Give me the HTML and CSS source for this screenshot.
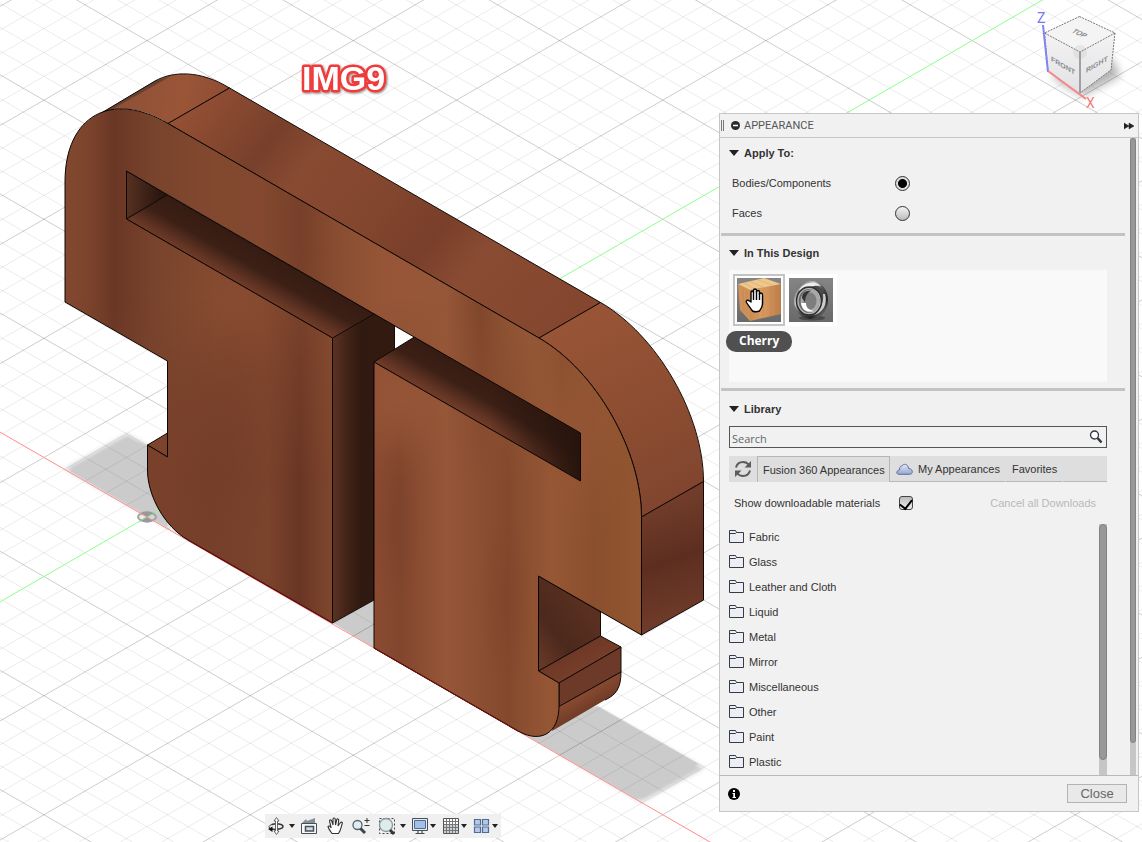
FILE: index.html
```html
<!DOCTYPE html>
<html lang="en">
<head>
<meta charset="utf-8">
<title>Appearance</title>
<link rel="stylesheet" href="styles.css">
</head>
<body>
<main class="workspace">
  <svg class="scene" aria-label="Model view">
    <defs>
      <linearGradient id="front" gradientUnits="userSpaceOnUse" x1="65" y1="0" x2="642" y2="0">
        <stop offset="0" stop-color="#83482f"/><stop offset=".04" stop-color="#7c442d"/><stop offset=".085" stop-color="#6a3725"/><stop offset=".15" stop-color="#78432c"/>
        <stop offset=".26" stop-color="#82492f"/><stop offset=".34" stop-color="#83482f"/><stop offset=".41" stop-color="#77402a"/><stop offset=".47" stop-color="#884d31"/>
        <stop offset=".55" stop-color="#965537"/><stop offset=".66" stop-color="#965738"/><stop offset=".72" stop-color="#80472c"/><stop offset=".77" stop-color="#915534"/>
        <stop offset=".81" stop-color="#965937"/><stop offset=".86" stop-color="#8c5030"/><stop offset=".93" stop-color="#9a5b37"/><stop offset="1" stop-color="#935632"/>
      </linearGradient>
      <linearGradient id="lower" gradientUnits="userSpaceOnUse" x1="147" y1="0" x2="333" y2="0">
        <stop offset="0" stop-color="#7a412c"/><stop offset=".35" stop-color="#753f2a"/><stop offset=".65" stop-color="#7a432c"/><stop offset=".82" stop-color="#693624"/><stop offset="1" stop-color="#80472e"/>
      </linearGradient>
      <linearGradient id="right" gradientUnits="userSpaceOnUse" x1="374" y1="0" x2="642" y2="0">
        <stop offset="0" stop-color="#8b4b31"/><stop offset=".1" stop-color="#82462e"/><stop offset=".27" stop-color="#965638"/><stop offset=".5" stop-color="#84492d"/><stop offset=".66" stop-color="#965735"/><stop offset=".82" stop-color="#8a4f2e"/><stop offset="1" stop-color="#935631"/>
      </linearGradient>
      <linearGradient id="fade" x1="0" y1="0" x2="0" y2="1"><stop offset="0" stop-color="#000"/><stop offset=".4" stop-color="#fff"/></linearGradient>
      <mask id="lowmask" maskUnits="userSpaceOnUse" x="0" y="300" width="700" height="460"><rect x="0" y="300" width="700" height="460" fill="url(#fade)"/></mask>
      <linearGradient id="floor" gradientUnits="userSpaceOnUse" x1="229" y1="279" x2="249" y2="244">
        <stop offset="0" stop-color="#723c28"/><stop offset=".2" stop-color="#5f3323"/><stop offset=".55" stop-color="#3c2016"/><stop offset="1" stop-color="#371c13"/>
      </linearGradient>
      <linearGradient id="endwall" gradientUnits="userSpaceOnUse" x1="126" y1="0" x2="160" y2="0"><stop offset="0" stop-color="#573222"/><stop offset="1" stop-color="#2b170f"/></linearGradient>
      <linearGradient id="slotdark" gradientUnits="userSpaceOnUse" x1="490" y1="0" x2="580" y2="0"><stop offset="0" stop-color="#26140d" stop-opacity="0"/><stop offset="1" stop-color="#26140d"/></linearGradient>
      <linearGradient id="gap" gradientUnits="userSpaceOnUse" x1="333" y1="0" x2="374" y2="0"><stop offset="0" stop-color="#5c3223"/><stop offset=".35" stop-color="#422317"/><stop offset=".7" stop-color="#2f1910"/><stop offset="1" stop-color="#321a11"/></linearGradient>
      <linearGradient id="top" gradientUnits="userSpaceOnUse" x1="180" y1="90" x2="526" y2="370">
        <stop offset="0" stop-color="#97533a"/><stop offset=".1" stop-color="#8b4a31"/><stop offset=".23" stop-color="#77402b"/><stop offset=".33" stop-color="#894a32"/><stop offset=".52" stop-color="#82452e"/><stop offset=".65" stop-color="#793f2a"/><stop offset=".76" stop-color="#8a4b33"/><stop offset="1" stop-color="#85462f"/>
      </linearGradient>
      <linearGradient id="cap" gradientUnits="userSpaceOnUse" x1="110" y1="100" x2="220" y2="120"><stop offset="0" stop-color="#8d5036"/><stop offset=".65" stop-color="#9a5537"/><stop offset="1" stop-color="#8f4d34"/></linearGradient>
      <linearGradient id="bend" gradientUnits="userSpaceOnUse" x1="580" y1="320" x2="670" y2="500"><stop offset="0" stop-color="#985436"/><stop offset=".6" stop-color="#8b4c31"/><stop offset="1" stop-color="#81452f"/></linearGradient>
      <linearGradient id="side" gradientUnits="userSpaceOnUse" x1="660" y1="505" x2="694" y2="610"><stop offset="0" stop-color="#713c2a"/><stop offset=".5" stop-color="#5d2e20"/><stop offset="1" stop-color="#6e3a29"/></linearGradient>
      <linearGradient id="notch" x1="0" y1="1" x2=".7" y2=".2"><stop offset="0" stop-color="#6d3b28"/><stop offset=".45" stop-color="#4b291c"/><stop offset="1" stop-color="#5b3021"/></linearGradient>
      <linearGradient id="step" x1="0" y1="0" x2="1" y2="1"><stop offset="0" stop-color="#5d3021"/><stop offset="1" stop-color="#87472f"/></linearGradient>
      <linearGradient id="under" gradientUnits="userSpaceOnUse" x1="580" y1="692" x2="592" y2="712"><stop offset="0" stop-color="#8c4d32"/><stop offset="1" stop-color="#6b3826"/></linearGradient>
      <radialGradient id="lit"><stop offset="0" stop-color="#9c5a3a" stop-opacity=".6"/><stop offset="1" stop-color="#9c5a3a" stop-opacity="0"/></radialGradient>
      <radialGradient id="dim"><stop offset="0" stop-color="#6c3624" stop-opacity=".5"/><stop offset="1" stop-color="#6c3624" stop-opacity="0"/></radialGradient>
      <linearGradient id="cubeface" x1="0" y1="0" x2="0" y2="1"><stop offset="0" stop-color="#f3f3f4"/><stop offset="1" stop-color="#e2e2e4"/></linearGradient>
      <filter id="soft" x="-20%" y="-20%" width="140%" height="140%"><feGaussianBlur stdDeviation="2"/></filter>
      <filter id="softer" x="-30%" y="-30%" width="160%" height="160%"><feGaussianBlur stdDeviation="5"/></filter>
      <filter id="drop" x="-20%" y="-20%" width="150%" height="150%"><feDropShadow dx="1" dy="1" stdDeviation="1" flood-color="#000" flood-opacity=".5"/></filter>
    </defs>

    <g fill="#cbcbcb">
      <path d="M65 469L127 434L170 458V529Z" filter="url(#soft)"/>
      <path d="M70 471L128 438L167 455V527L188 540Z"/>
      <path d="M333 623L374 600V648Z"/>
      <path d="M560 754L600 710L704 768L641 802Z" filter="url(#soft)"/>
      <path d="M518 731L597 706L698 764L637 799Z"/>
    </g>
    <path id="minor" class="minor"/>
    <path id="major" class="major"/>
    <path id="axis-y" class="axis-y"/>
    <path id="axis-x" class="axis-x"/>
    <g><ellipse cx="147" cy="517" rx="9" ry="4.500" fill="#ddd" fill-opacity=".6" stroke="#a2a2a2" stroke-width="2"/><path d="M147 517L153 513A9 5 0 0 0 141 513ZM147 517L153 521A9 5 0 0 1 141 521Z" fill="#999"/><path d="M139 521.500L155 512.500" stroke="#8c8"/><path d="M139 512.500L155 521.500" stroke="#d99"/></g>

    <g class="edges">
      <path fill="url(#gap)" d="M332.500 338L374 313L394.500 325V350L374 362V600L332.500 623Z"/>
      <path fill="url(#endwall)" d="M126.500 171V219L167 195Z"/>
      <path fill="url(#floor)" d="M126.500 219L332.500 338L374 314L167 195Z"/>
      <path fill="url(#floor)" d="M374 362L580.500 481V433L416 336Z"/>
      <path fill="url(#slotdark)" d="M480 376L580.500 433V481L480 423Z" stroke="none"/>
      <path fill="url(#notch)" d="M538.500 576L600.500 612V636L538.500 671Z"/>
      <path fill="url(#step)" d="M538.500 671L600.500 636L621 647L559 683Z"/>
      <path fill="#6d3a29" d="M559 683L621 647V672L559 706.500Z"/>
      <path fill="url(#under)" stroke="none" d="M559 706L621 672C621 688 616 695 605 700L552 731Z"/>
      <path fill="none" d="M559 706.500L621 672C621 688 616 695 605 700"/>
      <path fill="#7c432d" d="M147.500 445L167.500 433V457Z"/>
      <path fill="url(#cap)" stroke="none" d="M98 115L155 81C173 71 200 70 229.500 88L168 123.500C145 108 116 104 98 115Z"/>
      <path fill="#67402f" stroke="none" d="M98 115L155 81L171 76L111 110Z"/>
      <path fill="none" d="M98 115L155 81C173 71 200 70 229.500 88L168 123.500"/>
      <path fill="url(#top)" d="M168 123.500L229.500 88L600.500 302.500L539 338Z"/>
      <path fill="url(#bend)" d="M539 338L600.500 302.500C657 335 703.500 415 703.500 481.500L641.500 517C641.500 451 596 371 539 338Z"/>
      <path fill="url(#side)" d="M641.500 517L703.500 481.500V600L641.500 635Z"/>
    </g>
    <clipPath id="faceclip"><path clip-rule="evenodd" d="M65 302V182C65 116 111 90 168 123.500L539 338C596 371 641.500 451 641.500 517V635L538.500 576V671L559 683V706C559 733 541 744 518 731L374 648V362L580.500 481V433L126.500 171V219L332.500 338V623L188 540C165 527 147.500 496 147.500 470V445L167.500 457V361Z"/></clipPath>
    <g clip-path="url(#faceclip)">
      <rect x="60" y="100" width="590" height="650" fill="url(#front)"/>
      <g mask="url(#lowmask)">
        <rect x="60" y="300" width="273" height="340" fill="url(#lower)"/>
        <rect x="374" y="300" width="268" height="450" fill="url(#right)"/>
      </g>
      <ellipse cx="235" cy="310" rx="90" ry="70" fill="url(#lit)" opacity=".3"/>
      <ellipse cx="400" cy="400" rx="50" ry="60" fill="url(#lit)"/>
      <ellipse cx="230" cy="430" rx="60" ry="120" fill="url(#dim)" opacity=".5"/>
      <ellipse cx="395" cy="525" rx="26" ry="90" fill="url(#dim)" opacity=".5"/>
      <ellipse cx="505" cy="600" rx="28" ry="90" fill="url(#dim)" opacity=".4"/>
      <ellipse cx="585" cy="450" rx="40" ry="100" fill="url(#lit)" opacity=".6"/>
    </g>
    <path class="outline" d="M65 302V182C65 116 111 90 168 123.500L539 338C596 371 641.500 451 641.500 517V635L538.500 576V671L559 683V706C559 733 541 744 518 731L374 648V362L580.500 481V433L126.500 171V219L332.500 338V623L188 540C165 527 147.500 496 147.500 470V445L167.500 457V361Z"/>
    <path d="M188 540L332.500 623M374 648L518 731" stroke="#6b1010" stroke-width="1.200"/>
    <text class="caption" x="302" y="90">IMG9</text>
  </svg>

  <svg class="viewcube" viewBox="1030 5 100 105" aria-label="View cube">
    <path d="M1050 76L1082 96L1120 76L1112 58Z" fill="#000" opacity=".3" filter="url(#softer)"/>
    <path d="M1079.500 16.500L1115 33L1080 52L1044.500 33Z" fill="#f4f4f5"/>
    <path d="M1044.500 33L1080 52V93L1048 71Z" fill="url(#cubeface)"/>
    <path d="M1115 33L1080 52V93L1111 70Z" fill="url(#cubeface)"/>
    <circle cx="1080" cy="52" r="7" fill="#ccc" opacity=".35"/>
    <path d="M1079.500 16.500L1115 33L1080 52L1044.500 33ZM1115 33L1111 70L1080 93M1044.500 33L1048 71" fill="none" stroke="#777" stroke-width="1" stroke-dasharray="2 1"/>
    <path d="M1080 52V93" stroke="#888" stroke-width="1.500"/>
    <path d="M1043 25L1048 72" stroke="#8383f2" stroke-width="2"/>
    <path d="M1048 71L1086 99" stroke="#f58686" stroke-width="2"/>
    <text class="axis-label" x="1037" y="23" fill="#7777ee">Z</text>
    <text class="axis-label" x="1086" y="108" fill="#f27d7d">X</text>
    <g class="cube-text">
      <text transform="translate(1051 61) skewY(30)">FRONT</text>
      <text transform="translate(1086 73) skewY(-30)">RIGHT</text>
      <text transform="translate(1071 32) rotate(24) skewX(-28)">TOP</text>
    </g>
  </svg>

  <section class="panel" aria-label="Appearance">
    <header class="panel-head">
      <span class="grip"></span>
      <button class="plain" aria-label="Collapse"><svg width="9" height="9" viewBox="0 0 9 9"><circle cx="4.500" cy="4.500" r="4.500" fill="#2b2b2b"/><path d="M2 4.500H7" stroke="#fff" stroke-width="1.500"/></svg></button>
      <h1>APPEARANCE</h1>
      <button class="plain expand" aria-label="Expand"><svg width="10" height="8" viewBox="0 0 10 8"><path d="M0 1L5 4L0 7ZM5 1L10 4L5 7Z" fill="#222" stroke="#222" stroke-width=".5"/></svg></button>
    </header>

    <div class="panel-body">
      <div class="content">
        <section class="block apply">
          <h2><span class="tri"></span>Apply To:</h2>
          <div class="choice"><label for="bodies">Bodies/Components</label><input type="radio" id="bodies" name="target" checked></div>
          <div class="choice"><label for="faces">Faces</label><input type="radio" id="faces" name="target"></div>
        </section>

        <section class="block design">
          <h2><span class="tri"></span>In This Design</h2>
          <div class="swatches">
            <button class="swatch selected" aria-label="Cherry">
              <svg width="44" height="44" viewBox="0 0 44 44">
                <defs><linearGradient id="bg" x1="0" y1="0" x2="0" y2="1"><stop offset="0" stop-color="#858585"/><stop offset="1" stop-color="#696969"/></linearGradient>
                <linearGradient id="wood" x1="0" y1="0" x2="1" y2="0"><stop offset="0" stop-color="#c88b52"/><stop offset=".4" stop-color="#d99b61"/><stop offset=".75" stop-color="#c98a54"/><stop offset="1" stop-color="#bd7d48"/></linearGradient></defs>
                <rect width="44" height="44" fill="url(#bg)"/>
                <path d="M1 6L13 12V43L3 32Z" fill="#d09158"/><path d="M13 12L44 6V36L13 43Z" fill="url(#wood)"/><path d="M1 6L27 0L44 6L13 12Z" fill="#efc68c"/>
                <path d="M7 5L18 11M14 4L26 9M21 2L35 7" stroke="#dda96c" opacity=".6" fill="none"/>
                <path d="M20 12L21 41M27 10L26 40M34 9V38M39 8V37M6 10L7 34M10 13V37" stroke="#b87a46" opacity=".35" fill="none"/>
              </svg>
            </button>
            <button class="swatch" aria-label="Steel">
              <svg width="44" height="44" viewBox="0 0 44 44">
                <defs><linearGradient id="steel" x1="0" y1="0" x2="1" y2="1"><stop offset="0" stop-color="#555"/><stop offset=".3" stop-color="#ccc"/><stop offset=".5" stop-color="#555"/><stop offset=".75" stop-color="#222"/><stop offset="1" stop-color="#999"/></linearGradient></defs>
                <rect width="44" height="44" fill="url(#bg)"/>
                <ellipse cx="23" cy="40" rx="13" ry="2.500" fill="#484848"/>
                <ellipse cx="22" cy="22" rx="17" ry="19" fill="#4a4a4a"/>
                <ellipse cx="22" cy="22" rx="15.500" ry="17.500" fill="none" stroke="url(#steel)" stroke-width="3"/>
                <path d="M10 12C14 5 25 2 32 8C25 7 17 9 12 15Z" fill="#eee"/>
                <path d="M36 16C39 26 34 35 25 37C32 31 35 24 34 16Z" fill="#ccc"/>
                <ellipse cx="20" cy="23" rx="12.500" ry="14" fill="#696969" stroke="#303030" stroke-width="1.500"/>
                <ellipse cx="20" cy="23" rx="11" ry="12.500" fill="none" stroke="#bbb" stroke-width="1.200"/>
                <ellipse cx="21" cy="23" rx="8" ry="10" fill="#7d7d7d" stroke="#a9a9a9" stroke-width="3"/>
                <path d="M13 20C13 15 17 12 22 13C18 15 16 19 16 24Z" fill="#333"/>
                <path d="M12 25C13 32 18 35 25 33C19 32 17 29 17 25Z" fill="#fff"/>
              </svg>
            </button>
            <svg class="hand" width="20" height="26" viewBox="0 0 20 26"><path d="M6 15V5.500C6 3.500 8.500 3.500 8.500 5.500V3.500C8.500 1.500 11.500 1.500 11.500 3.500V5C11.500 3 14.500 3 14.500 5V7.500C14.500 5.500 17.500 5.500 17.500 8V17C17.500 20 15.500 22.500 14.500 24C12 25 9.500 25 7.500 24C5.500 21 3 18 1.500 15.500C.5 13.500 3 12.500 4.500 14Z" fill="#fff" stroke="#000" stroke-width="1.400" stroke-linejoin="round"/><path d="M8.500 5V13M11.500 4V13M14.500 6V13" stroke="#000" stroke-width="1.400"/></svg>
            <span class="tip" role="tooltip">Cherry</span>
          </div>
        </section>

        <section class="block library">
          <h2><span class="tri"></span>Library</h2>
          <div class="search"><input type="text" placeholder="Search" aria-label="Search"><svg width="14" height="14" viewBox="0 0 14 14"><circle cx="5.500" cy="5" r="4" fill="#fff" stroke="#2f3840" stroke-width="1.300"/><path d="M8.500 8L12.500 12.500" stroke="#2f3840" stroke-width="2.500"/></svg></div>
          <div class="tabs">
            <button class="refresh" aria-label="Refresh"><svg width="18" height="18" viewBox="0 0 18 18"><path d="M2 7.500C3 3.500 6 2 9 2C11.500 2 13.500 3 15 5M16 10.500C15 14.500 12 16 9 16C6.500 16 4.500 15 3 13" fill="none" stroke="#5c5c5c" stroke-width="2"/><path d="M17 1V7.500H10.500ZM1 17V10.500H7.500Z" fill="#5c5c5c"/></svg></button>
            <button class="tab active">Fusion 360 Appearances</button>
            <button class="tab cloud"><svg width="17" height="12" viewBox="0 0 17 12"><defs><linearGradient id="sky" x1="0" y1="0" x2="0" y2="1"><stop offset="0" stop-color="#e4e9f5"/><stop offset="1" stop-color="#93a5d3"/></linearGradient></defs><path d="M3 11.300C0 11.300 0 7.500 3.500 7C3.500 3.500 5 3 6 3C7 .7 12 .2 12.500 5.500C17.500 6 17.500 11.300 13.500 11.300Z" fill="url(#sky)" stroke="#5f6e96"/></svg>My Appearances</button>
            <button class="tab favorites">Favorites</button>
            <span class="tab-rest"></span>
          </div>
          <div class="options"><label for="show">Show downloadable materials</label><input type="checkbox" id="show" checked><button class="plain cancel" disabled>Cancel all Downloads</button></div>
          <div class="listing">
            <ul id="folders">
              <li>Fabric</li><li>Glass</li><li>Leather and Cloth</li><li>Liquid</li><li>Metal</li><li>Mirror</li><li>Miscellaneous</li><li>Other</li><li>Paint</li><li>Plastic</li>
            </ul>
            <div class="track list-track"><span class="thumb"></span></div>
          </div>
        </section>
      </div>
      <div class="track body-track"><span class="thumb"></span></div>
    </div>

    <footer class="panel-foot">
      <button class="plain" aria-label="Information"><svg width="12" height="12" viewBox="0 0 12 12"><circle cx="6" cy="6" r="6" fill="#000"/><path d="M5 2H7V4H5ZM4.500 5H7V9H8V10H4.500V9H5.300V6H4.500Z" fill="#fff"/></svg></button>
      <button class="close">Close</button>
    </footer>
  </section>

  <nav class="navbar" aria-label="View tools">
    <button aria-label="Orbit"><svg width="34" height="24" viewBox="0 0 34 24"><path d="M7 10.500C11 9 18 10 18 12.500C18 15 11 16 6 15" fill="none" stroke="#333" stroke-width="1.500"/><path d="M7 10.500C4 11.500 3 13 5 14" fill="none" stroke="#333"/><path d="M3 15L7.500 12.500V18Z" fill="#111"/><path d="M11.500 3.500L14 7H12.500V17H14L11.500 20.500L9 17H10.500V7H9Z" fill="#fff" stroke="#555" stroke-width=".9"/><path class="caret" d="M24 10H30L27 14Z"/></svg></button>
    <button aria-label="Look at"><svg width="23" height="24" viewBox="0 0 23 24"><path d="M2.500 9.500H17.500V19.500H2.500Z" fill="#f5f7f8" stroke="#46505a"/><path d="M6.500 12.500H14.500V17H6.500Z" fill="#d4dae0" stroke="#46505a" stroke-width="1.500"/><path d="M3 9L7 5L8 7L16 4V9Z" fill="#87919a"/></svg></button>
    <button aria-label="Pan"><svg width="26" height="24" viewBox="0 0 26 24"><path d="M10 19.500C8 17 6.500 14.500 6 12.500C6.500 11.500 8 11.800 9.200 14L7.500 7C7.500 5.500 9.200 5.500 9.700 7L11 11V5C11.300 3.600 13 3.600 13.200 5L13.500 11L14.800 5.500C15.300 4.500 16.800 4.800 16.700 6.200L16 12L18.500 8.500C19.600 7.500 20.800 8.500 20.200 9.700C19 13 19 16 16.500 19.500Z" fill="#fff" stroke="#333" stroke-width="1.100"/></svg></button>
    <button aria-label="Zoom"><svg width="26" height="24" viewBox="0 0 26 24"><circle cx="9.500" cy="11" r="4.500" fill="#e2edf0" stroke="#56616b" stroke-width="1.300"/><path d="M12.500 14.500L17 19" stroke="#3d454d" stroke-width="3"/><path d="M16.500 6.500H21.500M19 4V9M16.500 11.500H21.500" stroke="#333"/></svg></button>
    <button aria-label="Fit"><svg width="34" height="24" viewBox="0 0 34 24"><path d="M5.500 4.500H20.500V19.500H5.500Z" fill="none" stroke="#444" stroke-dasharray="2 2"/><circle cx="12" cy="11" r="6.500" fill="#ddebe9" stroke="#8a969e" stroke-width="1.300"/><path d="M16 16L20 20" stroke="#30383e" stroke-width="3"/><path class="caret" d="M26 10H32L29 14Z"/></svg></button>
    <button aria-label="Display settings"><svg width="30" height="24" viewBox="0 0 30 24"><path d="M4.500 4.500H19.500V16.500H4.500Z" fill="#e9edf2" stroke="#46505a"/><path d="M6.500 6.500H17.500V14.500H6.500Z" fill="#a5c0e4" stroke="#4c6c94"/><path d="M10 17V19M14 17V19M7.500 19.500H16.500" stroke="#46505a" stroke-width="1.200"/><path class="caret" d="M22 10H28L25 14Z"/></svg></button>
    <button aria-label="Grid and snaps"><svg width="32" height="24" viewBox="0 0 32 24"><path d="M5.500 4.500H20.500V19.500H5.500Z" fill="#fff" stroke="#555"/><path d="M6 11H20V19H6Z" fill="#ccd1d8"/><path d="M8.500 5V19M11.500 5V19M14.500 5V19M17.500 5V19M6 7.500H20M6 10.500H20M6 13.500H20M6 16.500H20" stroke="#777"/><path class="caret" d="M23 10H29L26 14Z"/></svg></button>
    <button aria-label="Viewports"><svg width="31" height="24" viewBox="0 0 31 24"><path d="M4.500 5.500H10.500V11H4.500ZM12.500 5.500H18.500V11H12.500ZM4.500 13H10.500V18.500H4.500ZM12.500 13H18.500V18.500H12.500Z" fill="#b5c9e8" stroke="#4f6c96" stroke-width="1.200"/><path class="caret" d="M22 10H28L25 14Z"/></svg></button>
  </nav>
</main>
<script src="scene.js"></script>
</body>
</html>
```

FILE: scene.js
```js
// Isometric ground grid: two families of lines crossing at the origin.
const origin = { x: 147, y: 517 };
const slope = Math.tan(Math.PI / 6);
const step = 23.82;
const reach = 2600;

function line(direction, k) {
  const y = origin.y + k * step;
  const y1 = y - direction * slope * origin.x;
  const y2 = y + direction * slope * (reach - origin.x);
  return `M0 ${y1.toFixed(1)}L${reach} ${y2.toFixed(1)}`;
}

let minor = "";
let major = "";
for (let k = -90; k <= 110; k++) {
  for (const direction of [1, -1]) {
    if (k === 0) continue;
    if (k % 5 === 0) major += line(direction, k);
    else minor += line(direction, k);
  }
}
document.getElementById("minor").setAttribute("d", minor);
document.getElementById("major").setAttribute("d", major);
document.getElementById("axis-x").setAttribute("d", line(1, 0));
document.getElementById("axis-y").setAttribute("d", line(-1, 0));

const folder = '<svg width="15" height="13" viewBox="0 0 15 13"><path d="M.5 12.500V.5H6.500L7.500 2.500H14.500V12.500Z" fill="#eceef3" stroke="#333b46"/><path d="M1 3.500H6.500L7.500 2.500" fill="none" stroke="#333b46"/></svg>';
for (const item of document.querySelectorAll("#folders li")) {
  item.insertAdjacentHTML("afterbegin", folder);
}
```

FILE: styles.css
```css
* { box-sizing: border-box; }
body {
  margin: 0;
  font: 11px/14px "Liberation Sans", Arial, sans-serif;
  color: #333;
  background: #fff;
}
button, input { font: inherit; color: inherit; }
button { margin: 0; padding: 0; border: 0; background: none; }
svg { display: block; flex: none; }
h1, h2, ul { margin: 0; padding: 0; }
ul { list-style: none; }

.workspace { position: relative; height: 100vh; min-height: 600px; overflow: hidden; }
.scene { position: absolute; inset: 0; width: 100%; height: 100%; }
.minor { stroke: #000; stroke-opacity: .08; fill: none; }
.major { stroke: #000; stroke-opacity: .2; fill: none; }
.axis-x { stroke: #ff8c8c; fill: none; }
.axis-y { stroke: #8cff8c; fill: none; }
.edges { stroke: #120a06; stroke-width: 1; stroke-linejoin: round; }
.outline { fill: none; stroke: #0c0604; stroke-width: 1; }
.caption {
  font: bold 34px "Liberation Sans", Arial, sans-serif;
  fill: #fff;
  stroke: #f03a3a;
  stroke-width: 5px;
  stroke-linejoin: round;
  paint-order: stroke;
  filter: url(#drop);
}

.viewcube { position: absolute; top: 5px; right: 12px; width: 100px; height: 105px; }
.axis-label { font: 14px Roboto, sans-serif; }
.cube-text { font: bold 7px "Liberation Sans", Arial, sans-serif; fill: #888c90; }

.panel {
  position: absolute;
  top: 113px;
  right: 3px;
  bottom: 30px;
  width: 420px;
  display: flex;
  flex-direction: column;
  border: 1px solid #c6c6c6;
  background: #f1f1f1;
}
.panel-head {
  flex: none;
  display: flex;
  align-items: center;
  gap: 4px;
  height: 24px;
  padding: 0 4px 0 1px;
  border-bottom: 1px solid #c6c6c6;
}
.panel-head h1 { font: 11px/14px Roboto, sans-serif; color: #555; }
.grip { width: 3px; height: 11px; margin-right: 3px; border: solid #777; border-width: 0 1px; }
.expand { margin-left: auto; }

.panel-body { flex: 1; min-height: 0; display: flex; gap: 5px; padding: 0 2px 0 1px; }
.content { flex: 1; min-width: 0; display: flex; flex-direction: column; }
.block { padding: 2px 18px 6px 8px; border-bottom: 3px solid #c3c3c3; }
.block h2 { display: flex; align-items: center; gap: 5px; height: 30px; font-size: 11px; line-height: 14px; }
.tri { border: 5px solid transparent; border-top: 6px solid #222; border-bottom: 0; }

.apply { padding: 0 18px 5px 8px; }
.choice { display: flex; align-items: center; height: 30px; padding-left: 3px; }
.choice label { width: 163px; }
.choice input {
  appearance: none;
  width: 15px;
  height: 15px;
  margin: 0;
  border: 1px solid #333;
  border-radius: 50%;
  background: linear-gradient(#f4f4f4, #bbb);
}
.choice input:checked { background: radial-gradient(circle, #000 4px, #ddd 5px); }

.swatches { position: relative; display: flex; align-items: flex-start; height: 112px; margin-top: 2px; padding: 4px; background: #f9f9f9; }
.swatch { padding: 4px; background: #fff; }
.selected { padding: 2px; border: 2px solid #c4c4c4; }
.hand { position: absolute; left: 16px; top: 17px; }
.tip {
  position: absolute;
  left: -3px;
  top: 61px;
  padding: 2px 13px 3px;
  border-radius: 10px;
  background: #505050;
  color: #fff;
  font: bold 12px/16px "Open Sans", "Noto Sans", sans-serif;
}

.library { flex: 1; min-height: 0; display: flex; flex-direction: column; padding-top: 3px; padding-bottom: 0; border: 0; }
.library h2 { flex: none; }
.search { flex: none; display: flex; align-items: center; height: 22px; margin-top: 2px; padding-right: 3px; border: 1px solid #555; }
.search input { flex: 1; min-width: 0; height: 18px; margin-top: 2px; padding: 0 2px; border: 0; outline: 0; background: none; font: 11px/16px "Open Sans", sans-serif; }
.search input::placeholder { color: #666; opacity: 1; }
.tabs { flex: none; display: flex; height: 26px; margin-top: 8px; background: #dedede; }
.refresh { width: 28px; padding: 4px 5px; }
.tab { border-bottom: 1px solid #b8b8b8; text-align: left; white-space: nowrap; }
.active { width: 133px; padding-left: 5px; border: 1px solid #b5b5b5; border-bottom: 0; }
.cloud { display: flex; align-items: center; gap: 5px; width: 115px; padding-left: 6px; }
.favorites { width: 56px; margin-left: 1px; padding-left: 6px; }
.tab-rest { flex: 1; margin-left: 1px; border-bottom: 1px solid #b8b8b8; }
.options { flex: none; display: flex; align-items: center; height: 42px; padding: 0 11px 0 5px; }
.options label { width: 165px; }
.options input {
  appearance: none;
  display: grid;
  place-content: start center;
  width: 14px;
  height: 14px;
  margin: 0;
  border: 1px solid #444;
  border-radius: 3px;
  background: linear-gradient(#bbb, #eee);
}
.options input:checked::after {
  content: "";
  width: 6px;
  height: 10px;
  border: solid #000;
  border-width: 0 2px 2px 0;
  transform: rotate(38deg);
}
.cancel { margin-left: auto; color: #b9b9b9; }
.listing { flex: 1; min-height: 0; display: flex; justify-content: space-between; }
.listing ul { overflow: hidden; }
.listing li { display: flex; align-items: center; gap: 5px; height: 25px; }
.track { background: #c5c6c8; }
.thumb { display: block; border: 1px solid #828284; border-radius: 5px; background: #98989a; }
.list-track { width: 8px; }
.list-track .thumb { height: 94%; }
.body-track { width: 6px; }
.body-track .thumb { height: 95%; }

.panel-foot { flex: none; display: flex; align-items: center; justify-content: space-between; height: 36px; padding: 0 11px 0 8px; border-top: 1px solid #b9b9b9; }
.close { width: 60px; height: 19px; border: 1px solid #b3b3b3; background: #e9e9e9; color: #666; font-size: 13px; line-height: 16px; }

.navbar { position: absolute; left: 265px; bottom: 4px; display: flex; background: #f0f0f0; }
.caret { fill: #222; }
```
